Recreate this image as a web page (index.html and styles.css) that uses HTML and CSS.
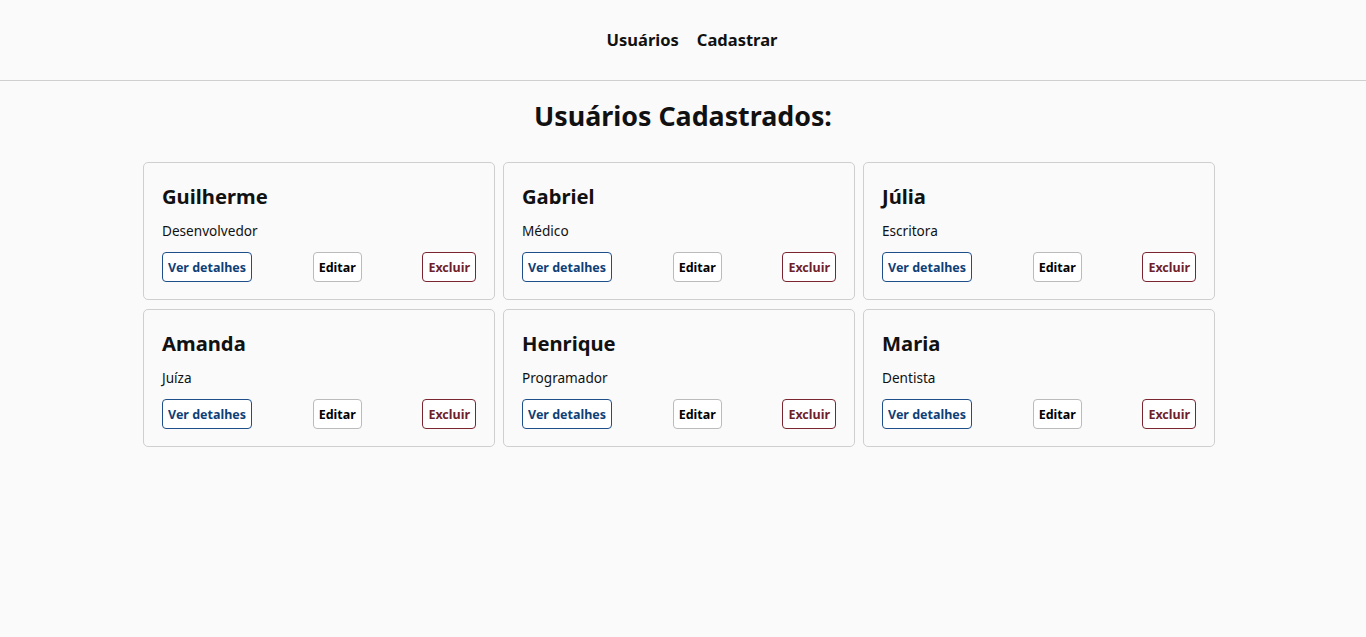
FILE: index.html
```html
<!DOCTYPE html>
<html lang="pt-BR">
<head>
<meta charset="utf-8">
<title>Usuários</title>
<link rel="stylesheet" href="styles.css">
</head>
<body>
<header class="topbar">
  <nav class="nav">
    <a href="#" class="nav-link">Usuários</a>
    <a href="#" class="nav-link">Cadastrar</a>
  </nav>
</header>
<main class="main">
  <h1 class="title">Usuários Cadastrados:</h1>
  <section class="grid">
    <article class="card">
      <h2 class="card-name">Guilherme</h2>
      <p class="card-role">Desenvolvedor</p>
      <div class="card-actions">
        <button class="btn btn-details">Ver detalhes</button>
        <button class="btn btn-edit">Editar</button>
        <button class="btn btn-delete">Excluir</button>
      </div>
    </article>
    <article class="card">
      <h2 class="card-name">Gabriel</h2>
      <p class="card-role">Médico</p>
      <div class="card-actions">
        <button class="btn btn-details">Ver detalhes</button>
        <button class="btn btn-edit">Editar</button>
        <button class="btn btn-delete">Excluir</button>
      </div>
    </article>
    <article class="card">
      <h2 class="card-name">Júlia</h2>
      <p class="card-role">Escritora</p>
      <div class="card-actions">
        <button class="btn btn-details">Ver detalhes</button>
        <button class="btn btn-edit">Editar</button>
        <button class="btn btn-delete">Excluir</button>
      </div>
    </article>
    <article class="card">
      <h2 class="card-name">Amanda</h2>
      <p class="card-role">Juíza</p>
      <div class="card-actions">
        <button class="btn btn-details">Ver detalhes</button>
        <button class="btn btn-edit">Editar</button>
        <button class="btn btn-delete">Excluir</button>
      </div>
    </article>
    <article class="card">
      <h2 class="card-name">Henrique</h2>
      <p class="card-role">Programador</p>
      <div class="card-actions">
        <button class="btn btn-details">Ver detalhes</button>
        <button class="btn btn-edit">Editar</button>
        <button class="btn btn-delete">Excluir</button>
      </div>
    </article>
    <article class="card">
      <h2 class="card-name">Maria</h2>
      <p class="card-role">Dentista</p>
      <div class="card-actions">
        <button class="btn btn-details">Ver detalhes</button>
        <button class="btn btn-edit">Editar</button>
        <button class="btn btn-delete">Excluir</button>
      </div>
    </article>
  </section>
</main>
</body>
</html>
```

FILE: styles.css
```css
* { box-sizing: border-box; }

html, body {
  margin: 0;
  padding: 0;
  background: #fafafa;
  color: #111;
  font-family: "Noto Sans", "Open Sans", sans-serif;
}

.topbar {
  height: 81px;
  border-bottom: 1px solid #cfcfcf;
  display: flex;
  align-items: center;
  justify-content: center;
}

.nav {
  display: flex;
  gap: 18px;
  padding: 0 0 1px 18px;
}

.nav-link {
  color: #111;
  text-decoration: none;
  font-weight: 700;
  font-size: 16.5px;
}

.main {
  padding-top: 16px;
}

.title {
  margin: 0;
  text-align: center;
  font-size: 26.8px;
  font-weight: 700;
  line-height: 38px;
}

.grid {
  margin: 27px 0 0 143px;
  width: 1072px;
  display: grid;
  grid-template-columns: repeat(3, 1fr);
  gap: 9px 8px;
}

.card {
  border: 1px solid #cfcfcf;
  border-radius: 5px;
  height: 138px;
  padding: 18px 18px 0 18px;
}

.card-name {
  margin: 0;
  font-size: 20.2px;
  font-weight: 700;
  line-height: 30px;
}

.card-role {
  margin: 10px 0 0 0;
  font-size: 13.6px;
  line-height: 20px;
}

.card-actions {
  margin-top: 11px;
  display: flex;
  justify-content: space-between;
  align-items: center;
}

.btn {
  font-family: inherit;
  font-size: 12.5px;
  font-weight: 700;
  height: 30px;
  padding: 0 5px;
  background: #fff;
  border-radius: 4px;
  border: 1px solid #bbb;
  color: #000;
  cursor: pointer;
}

.btn-details {
  border-color: #1e4f8a;
  color: #0f3f78;
}

.btn-delete {
  border-color: #7a2530;
  color: #6e1f2a;
}
```
